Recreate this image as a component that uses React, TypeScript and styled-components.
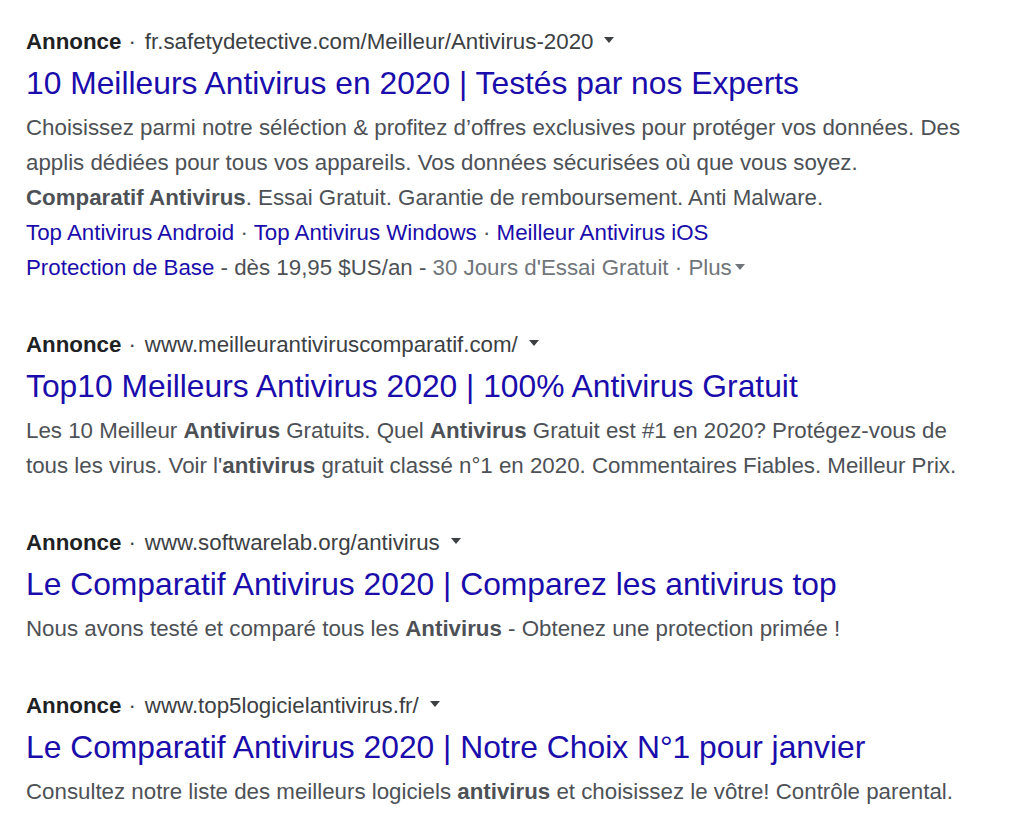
import React from "react";
import styled, { createGlobalStyle } from "styled-components";

const Global = createGlobalStyle`
  html, body { margin: 0; padding: 0; background: #ffffff; }
  body { font-family: "Liberation Sans", Arial, sans-serif; }
`;

const Page = styled.main`
  padding: 27px 0 0 26px;
  display: flex;
  flex-direction: column;
  gap: 45px;
  width: 960px;
`;

const Ad = styled.section`
  display: flex;
  flex-direction: column;
`;

const AdHeader = styled.div`
  display: flex;
  align-items: center;
  font-size: 22.3px;
  line-height: 30px;
  color: #3c4043;
  white-space: nowrap;
`;

const AdLabel = styled.span`
  font-weight: bold;
  color: #202124;
`;

const Sep = styled.span`
  padding: 0 9px 0 7px;
  color: #3c4043;
`;

const Caret = styled.span<{ $color?: string; $gap?: number }>`
  display: inline-block;
  width: 0;
  height: 0;
  margin-left: ${(p) => p.$gap ?? 11}px;
  border-left: 5.5px solid transparent;
  border-right: 5.5px solid transparent;
  border-top: 6.5px solid ${(p) => p.$color ?? "#3c4043"};
  vertical-align: middle;
  position: relative;
  top: -2px;
`;

const Title = styled.a`
  display: block;
  margin-top: 6px;
  font-size: 31.8px;
  line-height: 40px;
  color: #1a0dab;
  text-decoration: none;
  white-space: nowrap;
`;

const Desc = styled.div`
  margin-top: 7px;
  font-size: 22.3px;
  line-height: 35px;
  color: #4d5156;
`;

const Para = styled.div`
  width: 950px;
`;

const Line = styled.div`
  white-space: nowrap;
`;

const B = styled.b`
  font-weight: bold;
  color: #4d5156;
`;

const Link = styled.a`
  color: #1a0dab;
  text-decoration: none;
`;

const Dot = styled.span<{ $color?: string }>`
  color: ${(p) => p.$color ?? "#4d5156"};
`;

const Muted = styled.span`
  color: #70757a;
`;

type Header = { url: string };
const Head: React.FC<Header> = ({ url }) => (
  <AdHeader>
    <AdLabel>Annonce</AdLabel>
    <Sep>·</Sep>
    <span>{url}</span>
    <Caret />
  </AdHeader>
);

export default function App() {
  return (
    <>
      <Global />
      <Page>
        <Ad>
          <Head url="fr.safetydetective.com/Meilleur/Antivirus-2020" />
          <Title href="#">10 Meilleurs Antivirus en 2020 | Testés par nos Experts</Title>
          <Desc>
            <Para>
              Choisissez parmi notre séléction &amp; profitez d’offres exclusives pour protéger vos données. Des
              applis dédiées pour tous vos appareils. Vos données sécurisées où que vous soyez.
            </Para>
            <Line>
              <B>Comparatif Antivirus</B>. Essai Gratuit. Garantie de remboursement. Anti Malware.
            </Line>
            <Line>
              <Link href="#">Top Antivirus Android</Link> <Dot>·</Dot>{" "}
              <Link href="#">Top Antivirus Windows</Link> <Dot>·</Dot>{" "}
              <Link href="#">Meilleur Antivirus iOS</Link>
            </Line>
            <Line>
              <Link href="#">Protection de Base</Link> - dès 19,95 $US/an -{" "}
              <Muted>30 Jours d'Essai Gratuit · Plus</Muted>
              <Caret $color="#70757a" $gap={3} />
            </Line>
          </Desc>
        </Ad>

        <Ad>
          <Head url="www.meilleurantiviruscomparatif.com/" />
          <Title href="#">Top10 Meilleurs Antivirus 2020 | 100% Antivirus Gratuit</Title>
          <Desc>
            <Para>
              Les 10 Meilleur <B>Antivirus</B> Gratuits. Quel <B>Antivirus</B> Gratuit est #1 en 2020? Protégez-vous de
              tous les virus. Voir l'<B>antivirus</B> gratuit classé n°1 en 2020. Commentaires Fiables. Meilleur Prix.
            </Para>
          </Desc>
        </Ad>

        <Ad>
          <Head url="www.softwarelab.org/antivirus" />
          <Title href="#">Le Comparatif Antivirus 2020 | Comparez les antivirus top</Title>
          <Desc>
            <Line>
              Nous avons testé et comparé tous les <B>Antivirus</B> - Obtenez une protection primée !
            </Line>
          </Desc>
        </Ad>

        <Ad>
          <Head url="www.top5logicielantivirus.fr/" />
          <Title href="#">Le Comparatif Antivirus 2020 | Notre Choix N°1 pour janvier</Title>
          <Desc>
            <Line>
              Consultez notre liste des meilleurs logiciels <B>antivirus</B> et choisissez le vôtre! Contrôle parental.
            </Line>
          </Desc>
        </Ad>
      </Page>
    </>
  );
}
